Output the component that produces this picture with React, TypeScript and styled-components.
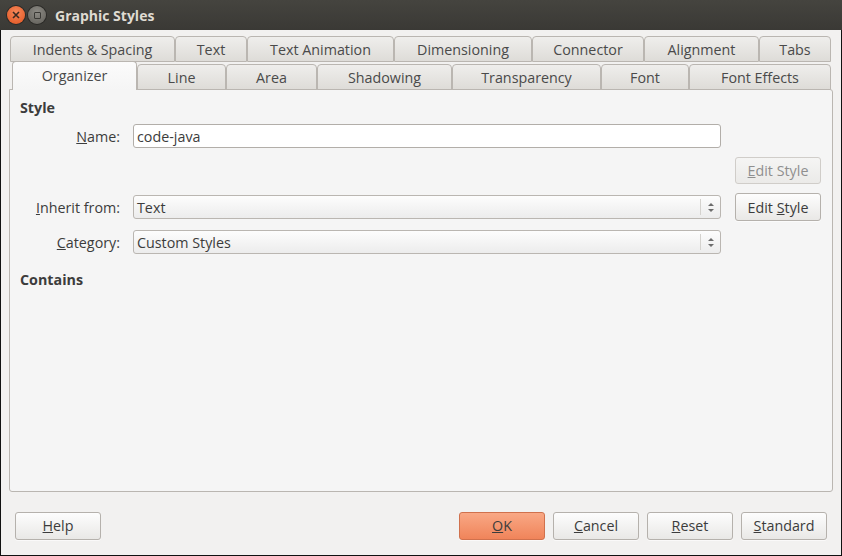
import { createGlobalStyle, styled } from 'styled-components';

const GlobalStyle = createGlobalStyle`
  html, body {
    margin: 0;
    padding: 0;
    background: #f2f1f0;
  }
  * {
    box-sizing: border-box;
  }
`;

const ROW_ONE = [
  { label: 'Indents & Spacing', width: 165 },
  { label: 'Text', width: 72 },
  { label: 'Text Animation', width: 147 },
  { label: 'Dimensioning', width: 138 },
  { label: 'Connector', width: 112 },
  { label: 'Alignment', width: 115 },
  { label: 'Tabs', width: 72 },
];

const ROW_TWO = [
  { label: 'Organizer', width: 125, active: true },
  { label: 'Line', width: 89 },
  { label: 'Area', width: 91 },
  { label: 'Shadowing', width: 135 },
  { label: 'Transparency', width: 149 },
  { label: 'Font', width: 88 },
  { label: 'Font Effects', width: 142 },
];

function SpinArrows() {
  return (
    <svg width="8" height="12" viewBox="0 0 8 12">
      <path d="M4 2 L7 5 L1 5 Z" fill="#6d6d6d" />
      <path d="M1 8 L7 8 L4 11 Z" fill="#6d6d6d" />
    </svg>
  );
}

function App() {
  return (
    <>
      <GlobalStyle />
      <StyledWindow>
        <StyledTitleBar>
          <StyledCloseButton>
            <svg width="8" height="8" viewBox="0 0 8 8">
              <path d="M1 1 L7 7 M7 1 L1 7" stroke="#3a2a22" strokeWidth="1.6" />
            </svg>
          </StyledCloseButton>
          <StyledMinButton>
            <StyledMinSquare />
          </StyledMinButton>
          <StyledTitle>Graphic Styles</StyledTitle>
        </StyledTitleBar>

        <StyledBody>
          <StyledTabRow>
            {ROW_ONE.map(tab => (
              <StyledTab key={tab.label} $width={tab.width}>
                {tab.label}
              </StyledTab>
            ))}
          </StyledTabRow>
          <StyledTabRow $second>
            {ROW_TWO.map(tab => (
              <StyledTab key={tab.label} $width={tab.width} $active={tab.active}>
                {tab.label}
              </StyledTab>
            ))}
          </StyledTabRow>

          <StyledPanel>
            <StyledHeading>Style</StyledHeading>
            <StyledForm>
              <StyledLabel>
                <u>N</u>ame:
              </StyledLabel>
              <StyledInput>code-java</StyledInput>
              <span />

              <span />
              <span />
              <StyledButton $disabled>
                <span>
                  <u>E</u>dit Style
                </span>
              </StyledButton>

              <StyledLabel>
                <u>I</u>nherit from:
              </StyledLabel>
              <StyledSelect>
                <span>Text</span>
                <StyledSelectArrows>
                  <SpinArrows />
                </StyledSelectArrows>
              </StyledSelect>
              <StyledButton>
                <span>
                  Edit <u>S</u>tyle
                </span>
              </StyledButton>

              <StyledLabel>
                <u>C</u>ategory:
              </StyledLabel>
              <StyledSelect>
                <span>Custom Styles</span>
                <StyledSelectArrows>
                  <SpinArrows />
                </StyledSelectArrows>
              </StyledSelect>
              <span />
            </StyledForm>
            <StyledHeading $spaced>Contains</StyledHeading>
          </StyledPanel>

          <StyledFooter>
            <StyledButton>
              <span>
                <u>H</u>elp
              </span>
            </StyledButton>
            <StyledFooterGroup>
              <StyledButton $primary>
                <span>
                  <u>O</u>K
                </span>
              </StyledButton>
              <StyledButton>
                <span>
                  <u>C</u>ancel
                </span>
              </StyledButton>
              <StyledButton>
                <span>
                  <u>R</u>eset
                </span>
              </StyledButton>
              <StyledButton>
                <span>
                  <u>S</u>tandard
                </span>
              </StyledButton>
            </StyledFooterGroup>
          </StyledFooter>
        </StyledBody>
      </StyledWindow>
    </>
  );
}

export default App;

const StyledWindow = styled.div`
  display: flex;
  flex-direction: column;

  width: 842px;
  height: 556px;

  border: 1px solid #111;
  border-top: none;
  background: #f2f1f0;

  font-family: 'Open Sans', 'DejaVu Sans', sans-serif;
  font-size: 14.3px;
  color: #3c3c3c;
`;

const StyledTitleBar = styled.div`
  display: flex;
  align-items: center;

  height: 30px;
  margin: 0 -1px;
  padding-left: 7px;

  background: linear-gradient(#45443f, #3a3935);
`;

const StyledCloseButton = styled.div`
  display: flex;
  justify-content: center;
  align-items: center;

  width: 18px;
  height: 18px;

  border-radius: 50%;
  background: radial-gradient(circle at 50% 35%, #f7885a, #e0531f);
  box-shadow: 0 0 0 1px #2b2a27;
`;

const StyledMinButton = styled.div`
  display: flex;
  justify-content: center;
  align-items: center;

  width: 18px;
  height: 18px;
  margin-left: 3px;

  border-radius: 50%;
  background: radial-gradient(circle at 50% 35%, #8d8b85, #5f5d57);
  box-shadow: 0 0 0 1px #2b2a27;
`;

const StyledMinSquare = styled.div`
  width: 7px;
  height: 7px;

  border: 1.5px solid #3a3935;
  border-radius: 1px;
`;

const StyledTitle = styled.div`
  margin-left: 9px;

  color: #dfdbd2;
  font-size: 14px;
  font-weight: 700;
`;

const StyledBody = styled.div`
  display: flex;
  flex: 1;
  flex-direction: column;

  padding: 7px 8px 0 8px;
`;

const StyledTabRow = styled.div<{ $second?: boolean }>`
  display: flex;
  align-items: flex-end;

  height: ${({ $second }) => ($second ? '28px' : '25px')};
  padding-left: ${({ $second }) => ($second ? '3px' : '1px')};
  margin-bottom: ${({ $second }) => ($second ? '-1px' : '0')};
`;

const StyledTab = styled.div<{ $width: number; $active?: boolean }>`
  position: relative;
  display: flex;
  justify-content: center;
  align-items: center;

  width: ${({ $width }) => $width}px;
  height: ${({ $active }) => ($active ? '29px' : '26px')};
  padding-top: 1px;
  padding-bottom: ${({ $active }) => ($active ? '3px' : '0')};

  border: 1px solid #bab6b1;
  border-bottom: ${({ $active }) => ($active ? 'none' : '1px solid #bab6b1')};
  border-radius: 4px 4px 0 0;
  background: ${({ $active }) =>
    $active ? 'linear-gradient(#fbfbfb, #f5f5f5)' : 'linear-gradient(#efeeec, #dedcd8)'};
  z-index: ${({ $active }) => ($active ? 2 : 0)};

  color: #4a4a4a;
  white-space: nowrap;
`;

const StyledPanel = styled.div`
  position: relative;
  display: flex;
  flex-direction: column;

  width: 824px;
  height: 403px;
  padding: 9px 10px;

  border: 1px solid #bab6b1;
  border-radius: 0 3px 3px 3px;
  background: #f5f5f5;
  z-index: 1;
`;

const StyledHeading = styled.div<{ $spaced?: boolean }>`
  margin-top: ${({ $spaced }) => ($spaced ? '17px' : '0')};

  color: #3c3c3c;
  font-weight: 700;
  line-height: 18px;
`;

const StyledForm = styled.div`
  display: grid;
  grid-template-columns: 113px 588px 100px;
  grid-template-rows: 24px 27px 28px 24px;
  row-gap: 9px;
  align-items: center;

  margin-top: 7px;

  & > div:nth-child(3n) {
    justify-self: end;
  }
`;

const StyledLabel = styled.div`
  padding-right: 13px;

  color: #3c3c3c;
  text-align: right;
  white-space: nowrap;
`;

const StyledInput = styled.div`
  display: flex;
  align-items: center;

  height: 24px;
  padding: 0 3px;

  border: 1px solid #b2aea9;
  border-radius: 3px;
  background: #fff;

  color: #3c3c3c;
`;

const StyledSelect = styled.div`
  display: flex;
  justify-content: space-between;
  align-items: center;

  height: 24px;
  padding-left: 3px;

  border: 1px solid #bab6b1;
  border-radius: 3px;
  background: linear-gradient(#fdfdfd, #ececec);

  color: #3c3c3c;
`;

const StyledSelectArrows = styled.div`
  display: flex;
  justify-content: center;
  align-items: center;

  width: 20px;
  height: 16px;

  border-left: 1px solid #d4d2ce;
`;

const StyledButton = styled.div<{ $disabled?: boolean; $primary?: boolean }>`
  display: flex;
  justify-content: center;
  align-items: center;

  width: 86px;
  height: ${({ $disabled }) => ($disabled ? '27px' : '28px')};

  border: 1px solid ${({ $primary, $disabled }) => ($primary ? '#d0714d' : $disabled ? '#d0cdc9' : '#b5b1ac')};
  border-radius: 3px;
  background: ${({ $primary, $disabled }) =>
    $primary
      ? 'linear-gradient(#f9a885, #f0845a)'
      : $disabled
        ? 'linear-gradient(#f5f5f4, #ebeae8)'
        : 'linear-gradient(#fdfdfd, #e9e8e6)'};
  box-shadow: ${({ $disabled }) => ($disabled ? 'none' : '0 1px 0 rgba(255, 255, 255, 0.6)')};

  color: ${({ $disabled }) => ($disabled ? '#8f8f8f' : '#3c3c3c')};
  white-space: nowrap;
`;

const StyledFooter = styled.div`
  display: flex;
  justify-content: space-between;
  align-items: center;

  height: 63px;
  padding: 4px 6px 0 6px;
`;

const StyledFooterGroup = styled.div`
  display: flex;
  gap: 8px;
`;
